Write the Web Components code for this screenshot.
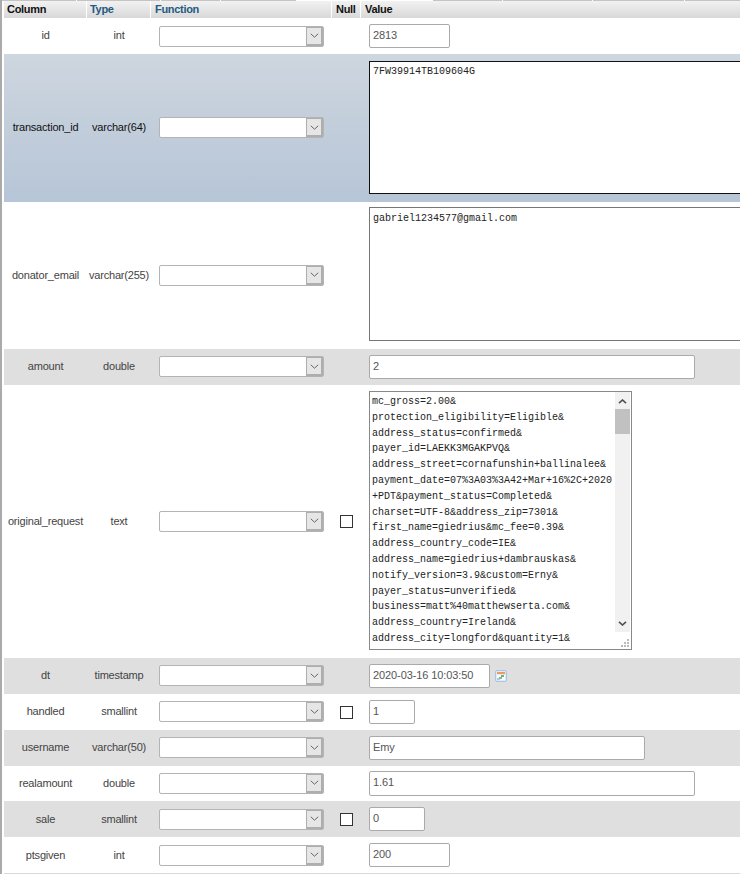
<!DOCTYPE html>
<html><head><meta charset="utf-8"><style>
html,body{margin:0;padding:0;background:#fff;height:874px;overflow:hidden}
body{font:11px "Liberation Sans",Arial,sans-serif;color:#444}
</style></head><body>
<template id="t-row"><style>
:host{display:grid;grid-template-columns:83px 64px 181px 29px 1fr;align-items:center;background:var(--bg,#fff);height:var(--h,36px);--ts:2px;--ss:1px}
:host([low]){--ts:0px;--ss:0px}
.n,.t{text-align:center;white-space:nowrap;letter-spacing:-.2px;margin-bottom:var(--ts)}
.f{padding-left:8px;display:flex;margin-bottom:var(--ss)}
.u{display:flex;justify-content:center;padding-right:1px}
.v{padding-left:8px;display:flex;align-items:center;min-width:0}
</style><div class="n"><slot name="name"></slot></div><div class="t"><slot name="type"></slot></div><div class="f"><fn-select></fn-select></div><div class="u"><slot name="null"></slot></div><div class="v"><slot></slot></div></template>

<template id="t-sel"><style>
:host{display:block;width:165px;height:21px;box-sizing:border-box;border:1px solid #b4b4b4;border-radius:2px;background:#fff;position:relative}
.b{position:absolute;right:0;top:0;bottom:0;width:17px;background:#e6e6e6;border:1px solid #aeaeae;border-right-width:2px;border-bottom-width:2px;display:flex;align-items:center;justify-content:center;box-sizing:border-box}
</style><div class="b"><svg width="9" height="5" viewBox="0 0 9 5"><path d="M.8 .8 4.5 4.2 8.2 .8" fill="none" stroke="#666" stroke-width="1"/></svg></div></template>

<template id="t-inp"><style>
:host{display:block;box-sizing:border-box;height:24px;border:1px solid #aaa;border-radius:2px;background:#fff;padding:0 3px;font:11px/21px "Liberation Sans",Arial,sans-serif;letter-spacing:-.1px;color:#555;white-space:nowrap;overflow:hidden}
</style><slot></slot></template>

<template id="t-area"><style>
:host{display:block;box-sizing:border-box;width:400px;flex:none;height:134px;border:1px solid #111;background:#fff;padding:3px 3px;font:10px/14px "Liberation Mono","Courier New",monospace;color:#222}
</style><slot></slot></template>

<template id="t-check"><style>
:host{display:block;box-sizing:border-box;width:13px;height:13px;border:1px solid #333;background:#fff}
</style></template>

<template id="t-head"><style>
:host{display:grid;grid-template-columns:83px 64px 181px 29px 1fr;height:17px;font:bold 11px/17px "Liberation Sans",Arial,sans-serif;letter-spacing:-.3px;color:#111}
div{background:linear-gradient(#f2f2f2,#d8d8d8);padding-left:3px;border-right:1px solid #fff;white-space:nowrap}
div:last-child{border-right:0}
.p{padding-left:4px}
.l{color:#235a81}
</style><div><slot name="c"></slot></div><div class="l"><slot name="t"></slot></div><div class="l p"><slot name="f"></slot></div><div class="p"><slot name="n"></slot></div><div class="p"><slot name="v"></slot></div></template>

<template id="t-long"><style>
:host{display:block;box-sizing:border-box;width:263px;height:259px;border:1px solid #888;background:#fff;position:relative;font:10px/15.8px "Liberation Mono","Courier New",monospace;color:#222;overflow:hidden;margin-bottom:2px}
.txt{padding:2px 2px;white-space:pre}
.sb{position:absolute;right:1px;top:0;width:15px;bottom:17px;background:#f1f1f1}
.th{position:absolute;right:1px;top:17px;width:15px;height:25px;background:#c1c1c1}
.a{position:absolute;right:4px;width:9px;height:5px}
.g{position:absolute;right:1px;bottom:1px;width:10px;height:10px}
</style><div class="sb"></div><div class="th"></div><div class="txt"><slot></slot></div>
<svg class="a" style="top:7px" viewBox="0 0 9 5"><path d="M1 4.2 4.5 1 8 4.2" fill="none" stroke="#505050" stroke-width="1.6"/></svg>
<svg class="a" style="bottom:23px" viewBox="0 0 9 5"><path d="M1 .8 4.5 4 8 .8" fill="none" stroke="#505050" stroke-width="1.6"/></svg>
<svg class="g" viewBox="0 0 10 10"><path d="M7 1h2v2H7zM4 4h2v2H4zM7 4h2v2H7zM1 7h2v2H1zM4 7h2v2H4zM7 7h2v2H7z" fill="#bbb"/></svg></template>

<template id="t-page"><style>
:host{display:block;height:874px;box-sizing:border-box;border-left:2px solid #aaa;padding:0 0 0 2px;overflow:hidden}
.top{display:flex;height:1px;gap:1px;margin-left:-2px}
.top i{display:block;background:#c4c4c4}
.end{height:1px;background:#d5d9e0}
</style><div class="top"><i style="width:74px"></i><i style="width:83px"></i><i style="width:59px"></i><i style="width:75px"></i><i style="width:135px;background:#fff"></i><i style="width:69px"></i><i style="width:89px"></i><i style="width:91px"></i><i style="flex:1"></i></div><slot></slot><div class="end"></div></template>

<template id="t-cal"><style>
:host{display:block;width:12px;height:12px;margin-left:5px;flex:none}
</style><svg width="12" height="12" viewBox="0 0 12 12"><rect x=".5" y=".5" width="11" height="11" rx="1.5" fill="#dfe9f7" stroke="#a9c4e8"/><rect x="2" y="2" width="8" height="2" fill="#ee9a5c"/><rect x="2" y="5" width="8" height="5" fill="#fafcff"/><rect x="2" y="8" width="3" height="2" fill="#a8cbe8"/><rect x="6" y="5" width="3" height="2" fill="#6fb56f"/><rect x="4" y="7" width="3" height="2" fill="#7fbf7f"/></svg></template>

<pma-page>
<pma-head><span slot="c">Column</span><span slot="t">Type</span><span slot="f">Function</span><span slot="n">Null</span><span slot="v">Value</span></pma-head>
<pma-row low style="--ts:2px"><span slot="name">id</span><span slot="type">int</span><fld-input style="width:81px">2813</fld-input></pma-row>
<pma-row style="--h:148px;--bg:linear-gradient(#ced6df,#b6c5d7)"><span slot="name" style="color:#111">transaction_id</span><span slot="type" style="color:#111">varchar(64)</span><fld-area style="margin-bottom:2px;height:133px">7FW39914TB109604G</fld-area></pma-row>
<pma-row style="--h:147px"><span slot="name">donator_email</span><span slot="type">varchar(255)</span><fld-area style="border-color:#777;margin-bottom:3px;padding-top:4px">gabriel1234577@gmail.com</fld-area></pma-row>
<pma-row style="--bg:#dfdfdf"><span slot="name">amount</span><span slot="type">double</span><fld-input style="width:326px">2</fld-input></pma-row>
<pma-row style="--h:273px"><span slot="name">original_request</span><span slot="type">text</span><fld-check slot="null"></fld-check><fld-long>mc_gross=2.00&amp;
protection_eligibility=Eligible&amp;
address_status=confirmed&amp;
payer_id=LAEKK3MGAKPVQ&amp;
address_street=cornafunshin+ballinalee&amp;
payment_date=07%3A03%3A42+Mar+16%2C+2020
+PDT&amp;payment_status=Completed&amp;
charset=UTF-8&amp;address_zip=7301&amp;
first_name=giedrius&amp;mc_fee=0.39&amp;
address_country_code=IE&amp;
address_name=giedrius+dambrauskas&amp;
notify_version=3.9&amp;custom=Erny&amp;
payer_status=unverified&amp;
business=matt%40matthewserta.com&amp;
address_country=Ireland&amp;
address_city=longford&amp;quantity=1&amp;</fld-long></pma-row>
<pma-row style="--bg:#dfdfdf"><span slot="name">dt</span><span slot="type">timestamp</span><fld-input style="width:121px">2020-03-16 10:03:50</fld-input><cal-icon></cal-icon></pma-row>
<pma-row><span slot="name">handled</span><span slot="type">smallint</span><fld-check slot="null"></fld-check><fld-input style="width:46px">1</fld-input></pma-row>
<pma-row style="--bg:#dfdfdf"><span slot="name">username</span><span slot="type">varchar(50)</span><fld-input style="width:276px">Emy</fld-input></pma-row>
<pma-row style="--h:35px"><span slot="name">realamount</span><span slot="type">double</span><fld-input style="width:326px;height:25px">1.61</fld-input></pma-row>
<pma-row low style="--bg:#dfdfdf"><span slot="name">sale</span><span slot="type">smallint</span><fld-check slot="null"></fld-check><fld-input style="width:56px">0</fld-input></pma-row>
<pma-row low><span slot="name">ptsgiven</span><span slot="type">int</span><fld-input style="width:81px">200</fld-input></pma-row>
</pma-page>
<script>
const reg=(tag,id)=>customElements.define(tag,class extends HTMLElement{constructor(){super();this.attachShadow({mode:'open'}).appendChild(document.getElementById(id).content.cloneNode(true))}});
reg('fn-select','t-sel');reg('pma-row','t-row');reg('fld-input','t-inp');reg('fld-area','t-area');reg('fld-check','t-check');reg('pma-head','t-head');reg('fld-long','t-long');reg('pma-page','t-page');reg('cal-icon','t-cal');
</script>
</body></html>
